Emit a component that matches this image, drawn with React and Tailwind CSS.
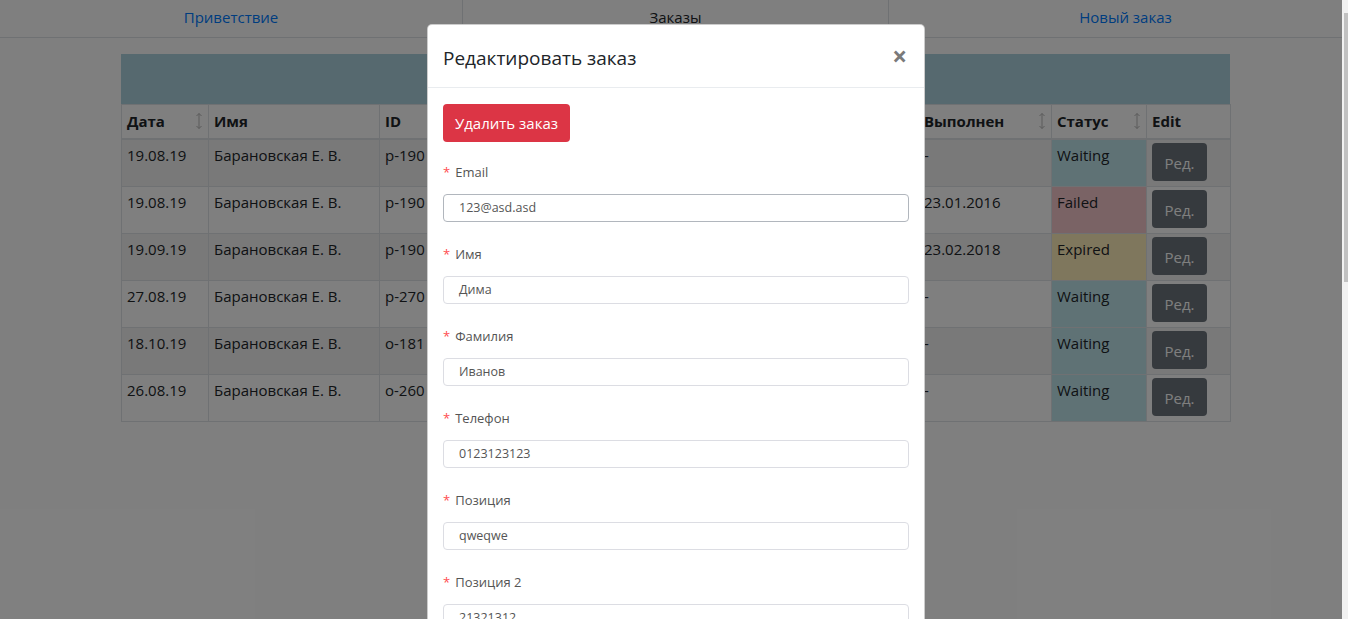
import React from "react";

const rows = [
  { d: "19.08.19", id: "p-190", done: "-", st: "Waiting" },
  { d: "19.08.19", id: "p-190", done: "23.01.2016", st: "Failed" },
  { d: "19.09.19", id: "p-190", done: "23.02.2018", st: "Expired" },
  { d: "27.08.19", id: "p-270", done: "-", st: "Waiting" },
  { d: "18.10.19", id: "o-181", done: "-", st: "Waiting" },
  { d: "26.08.19", id: "o-260", done: "-", st: "Waiting" },
];

const stBg = {
  Waiting: "bg-[#bee5eb]",
  Failed: "bg-[#f5c6cb]",
  Expired: "bg-[#ffeeba]",
};

function Sort() {
  return (
    <svg width="8" height="18" viewBox="0 0 8 18" className="shrink-0">
      <path d="M4 1.5 V16.5 M1.5 4 L4 1.5 L6.5 4 M1.5 14 L4 16.5 L6.5 14" stroke="#b5b5b5" strokeWidth="1" fill="none" />
    </svg>
  );
}

const fields = [
  { l: "Email", v: "123@asd.asd", focus: true },
  { l: "Имя", v: "Дима" },
  { l: "Фамилия", v: "Иванов" },
  { l: "Телефон", v: "0123123123" },
  { l: "Позиция", v: "qweqwe" },
  { l: "Позиция 2", v: "21321312" },
  { l: "Позиция 3", v: "" },
];

const th = "border border-b-2 border-[#dee2e6] px-[5px] text-left font-bold";
const td = "border border-[#dee2e6] px-[5px] pb-[19px] pt-[3px] align-top";

export default function App() {
  return (
    <div className="flex h-[619px] w-full overflow-hidden bg-white text-[#212529]" style={{ fontFamily: '"Open Sans", "Noto Sans", sans-serif' }}>
      <div className="relative h-full flex-1">
        {/* page */}
        <div className="flex h-[38px] border-b border-[#dee2e6] text-[15px]">
          <div className="flex w-[463px] items-center justify-center border-r border-[#dee2e6] pb-[2px] text-[#007bff]">Приветствие</div>
          <div className="flex w-[426px] items-center justify-center border-r border-[#dee2e6] pb-[2px] text-[#212529]">Заказы</div>
          <div className="flex flex-1 items-center justify-center pb-[2px] pl-[20px] text-[#007bff]">Новый заказ</div>
        </div>
        <div className="ml-[121px] mt-[16px] w-[1109px]">
          <div className="h-[50px] bg-[#acd3de]"></div>
          <table className="w-full table-fixed border-collapse text-[15px] leading-6">
            <colgroup>
              <col className="w-[87px]" />
              <col className="w-[171px]" />
              <col className="w-[160px]" />
              <col className="w-[190px]" />
              <col className="w-[189px]" />
              <col className="w-[133px]" />
              <col className="w-[95px]" />
              <col className="w-[84px]" />
            </colgroup>
            <thead>
              <tr className="h-[34px]">
                <th className={th}>
                  <div className="flex items-center justify-between"><span>Дата</span><Sort /></div>
                </th>
                <th className={th}>Имя</th>
                <th className={th}>ID</th>
                <th className={th}>Email</th>
                <th className={th}>Позиция</th>
                <th className={th}>
                  <div className="flex items-center justify-between"><span>Выполнен</span><Sort /></div>
                </th>
                <th className={th}>
                  <div className="flex items-center justify-between"><span>Статус</span><Sort /></div>
                </th>
                <th className={th}>Edit</th>
              </tr>
            </thead>
            <tbody>
              {rows.map((r, i) => (
                <tr key={i} className={i % 2 === 0 ? "bg-[#f2f2f2]" : ""}>
                  <td className={td}>{r.d}</td>
                  <td className={td}>Барановская Е. В.</td>
                  <td className={td}>{r.id}</td>
                  <td className={td}>123@asd.asd</td>
                  <td className={td}>qweqwe</td>
                  <td className={td}>{r.done}</td>
                  <td className={`${td} ${stBg[r.st]}`}>{r.st}</td>
                  <td className="border border-[#dee2e6] px-[5px] py-[3px] align-top">
                    <div className="flex h-[38px] w-[55px] items-center justify-center rounded-[4px] bg-[#6c757d] pt-[2px] text-[15px] text-white">Ред.</div>
                  </td>
                </tr>
              ))}
            </tbody>
          </table>
        </div>

        {/* overlay */}
        <div className="absolute inset-0 bg-black/50"></div>

        {/* modal */}
        <div className="absolute left-[427px] top-[24px] w-[498px] rounded-[5px] border border-black/20 bg-white">
          <div className="flex h-[63px] items-center justify-between border-b border-[#e9ecef] px-[15px] pt-[3px]">
            <div className="text-[19px] font-medium leading-[30px] text-[#212529]">Редактировать заказ</div>
            <div className="mr-[2px] pb-[3px] text-[26px] font-bold leading-none text-[#7a7a7a]">×</div>
          </div>
          <div className="px-[15px] pt-[16px]">
            <div className="flex h-[38px] w-[127px] items-center justify-center rounded-[4px] bg-[#dc3545] text-[15px] text-white">Удалить заказ</div>
            <div className="mt-[20px] flex flex-col">
              {fields.map((f, i) => (
                <div key={i} className="mb-[22px] flex flex-col">
                  <div className="flex h-[21px] items-center text-[13px] leading-[21px] text-[#555]">
                    <span className="mr-[5px] text-[13px] text-[#ff4d4f]">*</span>
                    {f.l}
                  </div>
                  <div className={`mt-[11px] flex h-[28px] items-center rounded-[4px] border bg-white pl-[15px] text-[12.5px] text-[#555] ${f.focus ? "border-[#b1b6bd]" : "border-[#dcdde3]"}`}>
                    {f.v}
                  </div>
                </div>
              ))}
            </div>
          </div>
        </div>
      </div>

      {/* scrollbar */}
      <div className="flex h-full w-[6px] flex-col bg-[#f1f1f1] pl-[2px]">
        <div className="mt-[13px] h-[269px] w-[4px] bg-[#c1c1c1]"></div>
      </div>
    </div>
  );
}
